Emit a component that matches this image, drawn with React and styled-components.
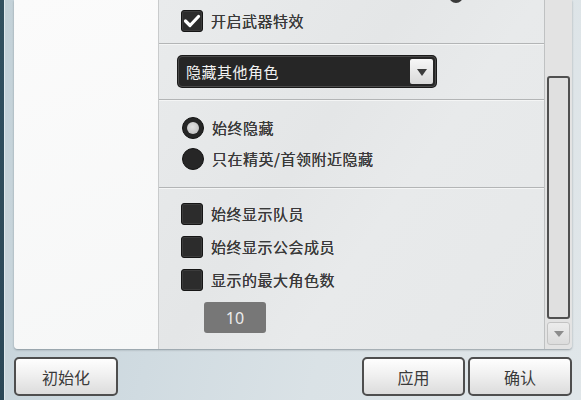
import React from "react";
import styled, { createGlobalStyle } from "styled-components";

const Global = createGlobalStyle`
  html, body { margin: 0; padding: 0; }
  body { font-family: "Noto Sans CJK SC", "Noto Sans", sans-serif; }
  * { box-sizing: border-box; }
`;

const Screen = styled.div`
  width: 581px;
  height: 400px;
  display: flex;
  overflow: hidden;
`;

const EdgeStrip = styled.div`
  width: 4px;
  background: linear-gradient(180deg, #32505f, #2a4757);
`;

const Frame = styled.div`
  flex: 1;
  display: flex;
  flex-direction: column;
  padding: 0 9px;
  background: linear-gradient(105deg, #c3d1d8 0%, #d0dbe1 35%, #dae2e6 60%, #e0e6e9 100%);
  border-left: 1px solid #dfe8ec;
`;

const Panel = styled.div`
  height: 349px;
  display: flex;
  border-radius: 0 0 4px 4px;
  overflow: hidden;
  box-shadow: 0 1px 2px rgba(60, 70, 80, 0.45);
`;

const LeftPane = styled.div`
  width: 145px;
  background: linear-gradient(160deg, #fbfbfb, #f6f7f7);
  border-right: 1px solid #c9cbcc;
`;

const RightPane = styled.div`
  flex: 1;
  display: flex;
  flex-direction: column;
  overflow: hidden;
  background: linear-gradient(125deg, #e9ebec 0%, #e4e6e7 40%, #e8eaeb 60%, #e6e8e9 100%);
`;

const SliderRow = styled.div`
  margin-top: -37px;
  height: 40px;
  flex: none;
  display: flex;
  align-items: flex-end;
  padding-left: 290px;
`;

const Knob = styled.div`
  width: 14px;
  height: 14px;
  border-radius: 50%;
  background: #3a3a3a;
`;

const Section = styled.div`
  flex: none;
  display: flex;
  flex-direction: column;
  align-items: flex-start;
  gap: ${(p) => p.$gap || 0}px;
  padding: ${(p) => p.$pt}px 0 0 ${(p) => p.$pl}px;
  height: ${(p) => (p.$h ? p.$h + "px" : "auto")};
  border-top: ${(p) => (p.$divider ? "1px solid #b3b5b6" : "none")};
  box-shadow: ${(p) => (p.$divider ? "inset 0 1px 0 #f4f5f5" : "none")};
`;

const Row = styled.label`
  display: flex;
  align-items: center;
  gap: 8px;
  height: 22px;
`;

const Label = styled.span`
  font-size: 15px;
  letter-spacing: 0.5px;
  color: #3a3a3a;
  line-height: 22px;
  text-shadow: 0 0 0.4px #3a3a3a;
`;

const Box = styled.span`
  width: 22px;
  height: 22px;
  border-radius: 3px;
  background: #2c2c2c;
  border: 1px solid #151515;
  box-shadow: inset 0 0 0 1px #3c3c3c;
  display: flex;
  align-items: center;
  justify-content: center;
`;

const Radio = styled.span`
  width: 22px;
  height: 22px;
  border-radius: 50%;
  background: #262626;
  border: 1px solid #141414;
  display: flex;
  align-items: center;
  justify-content: center;
  &::after {
    content: "";
    width: 12px;
    height: 12px;
    border-radius: 50%;
    background: radial-gradient(circle at 45% 40%, #e2e2e2, #b8b8b8);
    display: ${(p) => (p.$on ? "block" : "none")};
  }
`;

const Select = styled.div`
  width: 258px;
  height: 31px;
  border-radius: 4px;
  background: #262626;
  border: 1px solid #4a4a4a;
  box-shadow: 0 0 0 1px #1a1a1a;
  display: flex;
  align-items: center;
  justify-content: space-between;
  padding: 0 2px 0 7px;
`;

const SelectText = styled.span`
  font-size: 15px;
  letter-spacing: 0.5px;
  color: #f2f2f2;
`;

const ArrowBtn = styled.span`
  width: 23px;
  height: 25px;
  border-radius: 2px;
  background: linear-gradient(180deg, #f7f7f7, #d9d9d9);
  display: flex;
  align-items: center;
  justify-content: center;
  &::after {
    content: "";
    border-left: 5px solid transparent;
    border-right: 5px solid transparent;
    border-top: 7px solid #3c3c3c;
    margin-top: 2px;
  }
`;

const NumBox = styled.div`
  margin-left: 23px;
  width: 62px;
  height: 31px;
  border-radius: 3px;
  background: #777777;
  color: #ececec;
  font-size: 16px;
  display: flex;
  align-items: center;
  justify-content: center;
  font-family: "Noto Sans", sans-serif;
`;

const Scrollbar = styled.div`
  width: 28px;
  display: flex;
  flex-direction: column;
  align-items: center;
  background: #e3e3e3;
  border-left: 1px solid #bfc1c2;
  padding-top: 76px;
`;

const Thumb = styled.div`
  width: 23px;
  height: 243px;
  border: 2px solid #505050;
  border-radius: 3px;
  background: #e0e0e0;
`;

const DownBtn = styled.div`
  margin-top: 3px;
  width: 23px;
  height: 23px;
  border: 1px solid #c3c3c3;
  border-radius: 3px;
  background: linear-gradient(180deg, #ececec, #dcdcdc);
  display: flex;
  align-items: center;
  justify-content: center;
  &::after {
    content: "";
    border-left: 5px solid transparent;
    border-right: 5px solid transparent;
    border-top: 6px solid #8c8c8c;
  }
`;

const Footer = styled.div`
  display: flex;
  justify-content: space-between;
  padding-top: 8px;
`;

const BtnGroup = styled.div`
  display: flex;
  gap: 3px;
`;

const Button = styled.button`
  width: ${(p) => p.$w}px;
  height: 39px;
  border: 2px solid #4e4e4e;
  border-radius: 5px;
  background: linear-gradient(180deg, #fefefe 0%, #f0f0f0 45%, #dcdcdc 100%);
  box-shadow: inset 0 1px 0 #ffffff;
  font-family: "Noto Sans CJK SC", sans-serif;
  font-size: 16px;
  color: #3a3a3a;
  padding: 0;
  cursor: pointer;
`;

const Check = () => (
  <svg width="18" height="16" viewBox="0 0 18 16">
    <polyline
      points="2.5,8 7,12.5 15.5,3.5"
      fill="none"
      stroke="#ffffff"
      strokeWidth="3.2"
      strokeLinecap="round"
      strokeLinejoin="round"
    />
  </svg>
);

export default function App() {
  return (
    <>
      <Global />
      <Screen>
        <EdgeStrip />
        <Frame>
          <Panel>
            <LeftPane />
            <RightPane>
              <SliderRow>
                <Knob />
              </SliderRow>
              <Section $pt={7} $pl={22} $h={40}>
                <Row>
                  <Box>
                    <Check />
                  </Box>
                  <Label>开启武器特效</Label>
                </Row>
              </Section>
              <Section $divider $pt={12} $pl={19} $h={56}>
                <Select>
                  <SelectText>隐藏其他角色</SelectText>
                  <ArrowBtn />
                </Select>
              </Section>
              <Section $divider $pt={17} $pl={23} $gap={9} $h={88}>
                <Row>
                  <Radio $on />
                  <Label>始终隐藏</Label>
                </Row>
                <Row>
                  <Radio />
                  <Label>只在精英/首领附近隐藏</Label>
                </Row>
              </Section>
              <Section $divider $pt={15} $pl={22} $gap={11}>
                <Row>
                  <Box />
                  <Label>始终显示队员</Label>
                </Row>
                <Row>
                  <Box />
                  <Label>始终显示公会成员</Label>
                </Row>
                <Row>
                  <Box />
                  <Label>显示的最大角色数</Label>
                </Row>
                <NumBox>10</NumBox>
              </Section>
            </RightPane>
            <Scrollbar>
              <Thumb />
              <DownBtn />
            </Scrollbar>
          </Panel>
          <Footer>
            <Button $w={104}>初始化</Button>
            <BtnGroup>
              <Button $w={103}>应用</Button>
              <Button $w={104}>确认</Button>
            </BtnGroup>
          </Footer>
        </Frame>
      </Screen>
    </>
  );
}
